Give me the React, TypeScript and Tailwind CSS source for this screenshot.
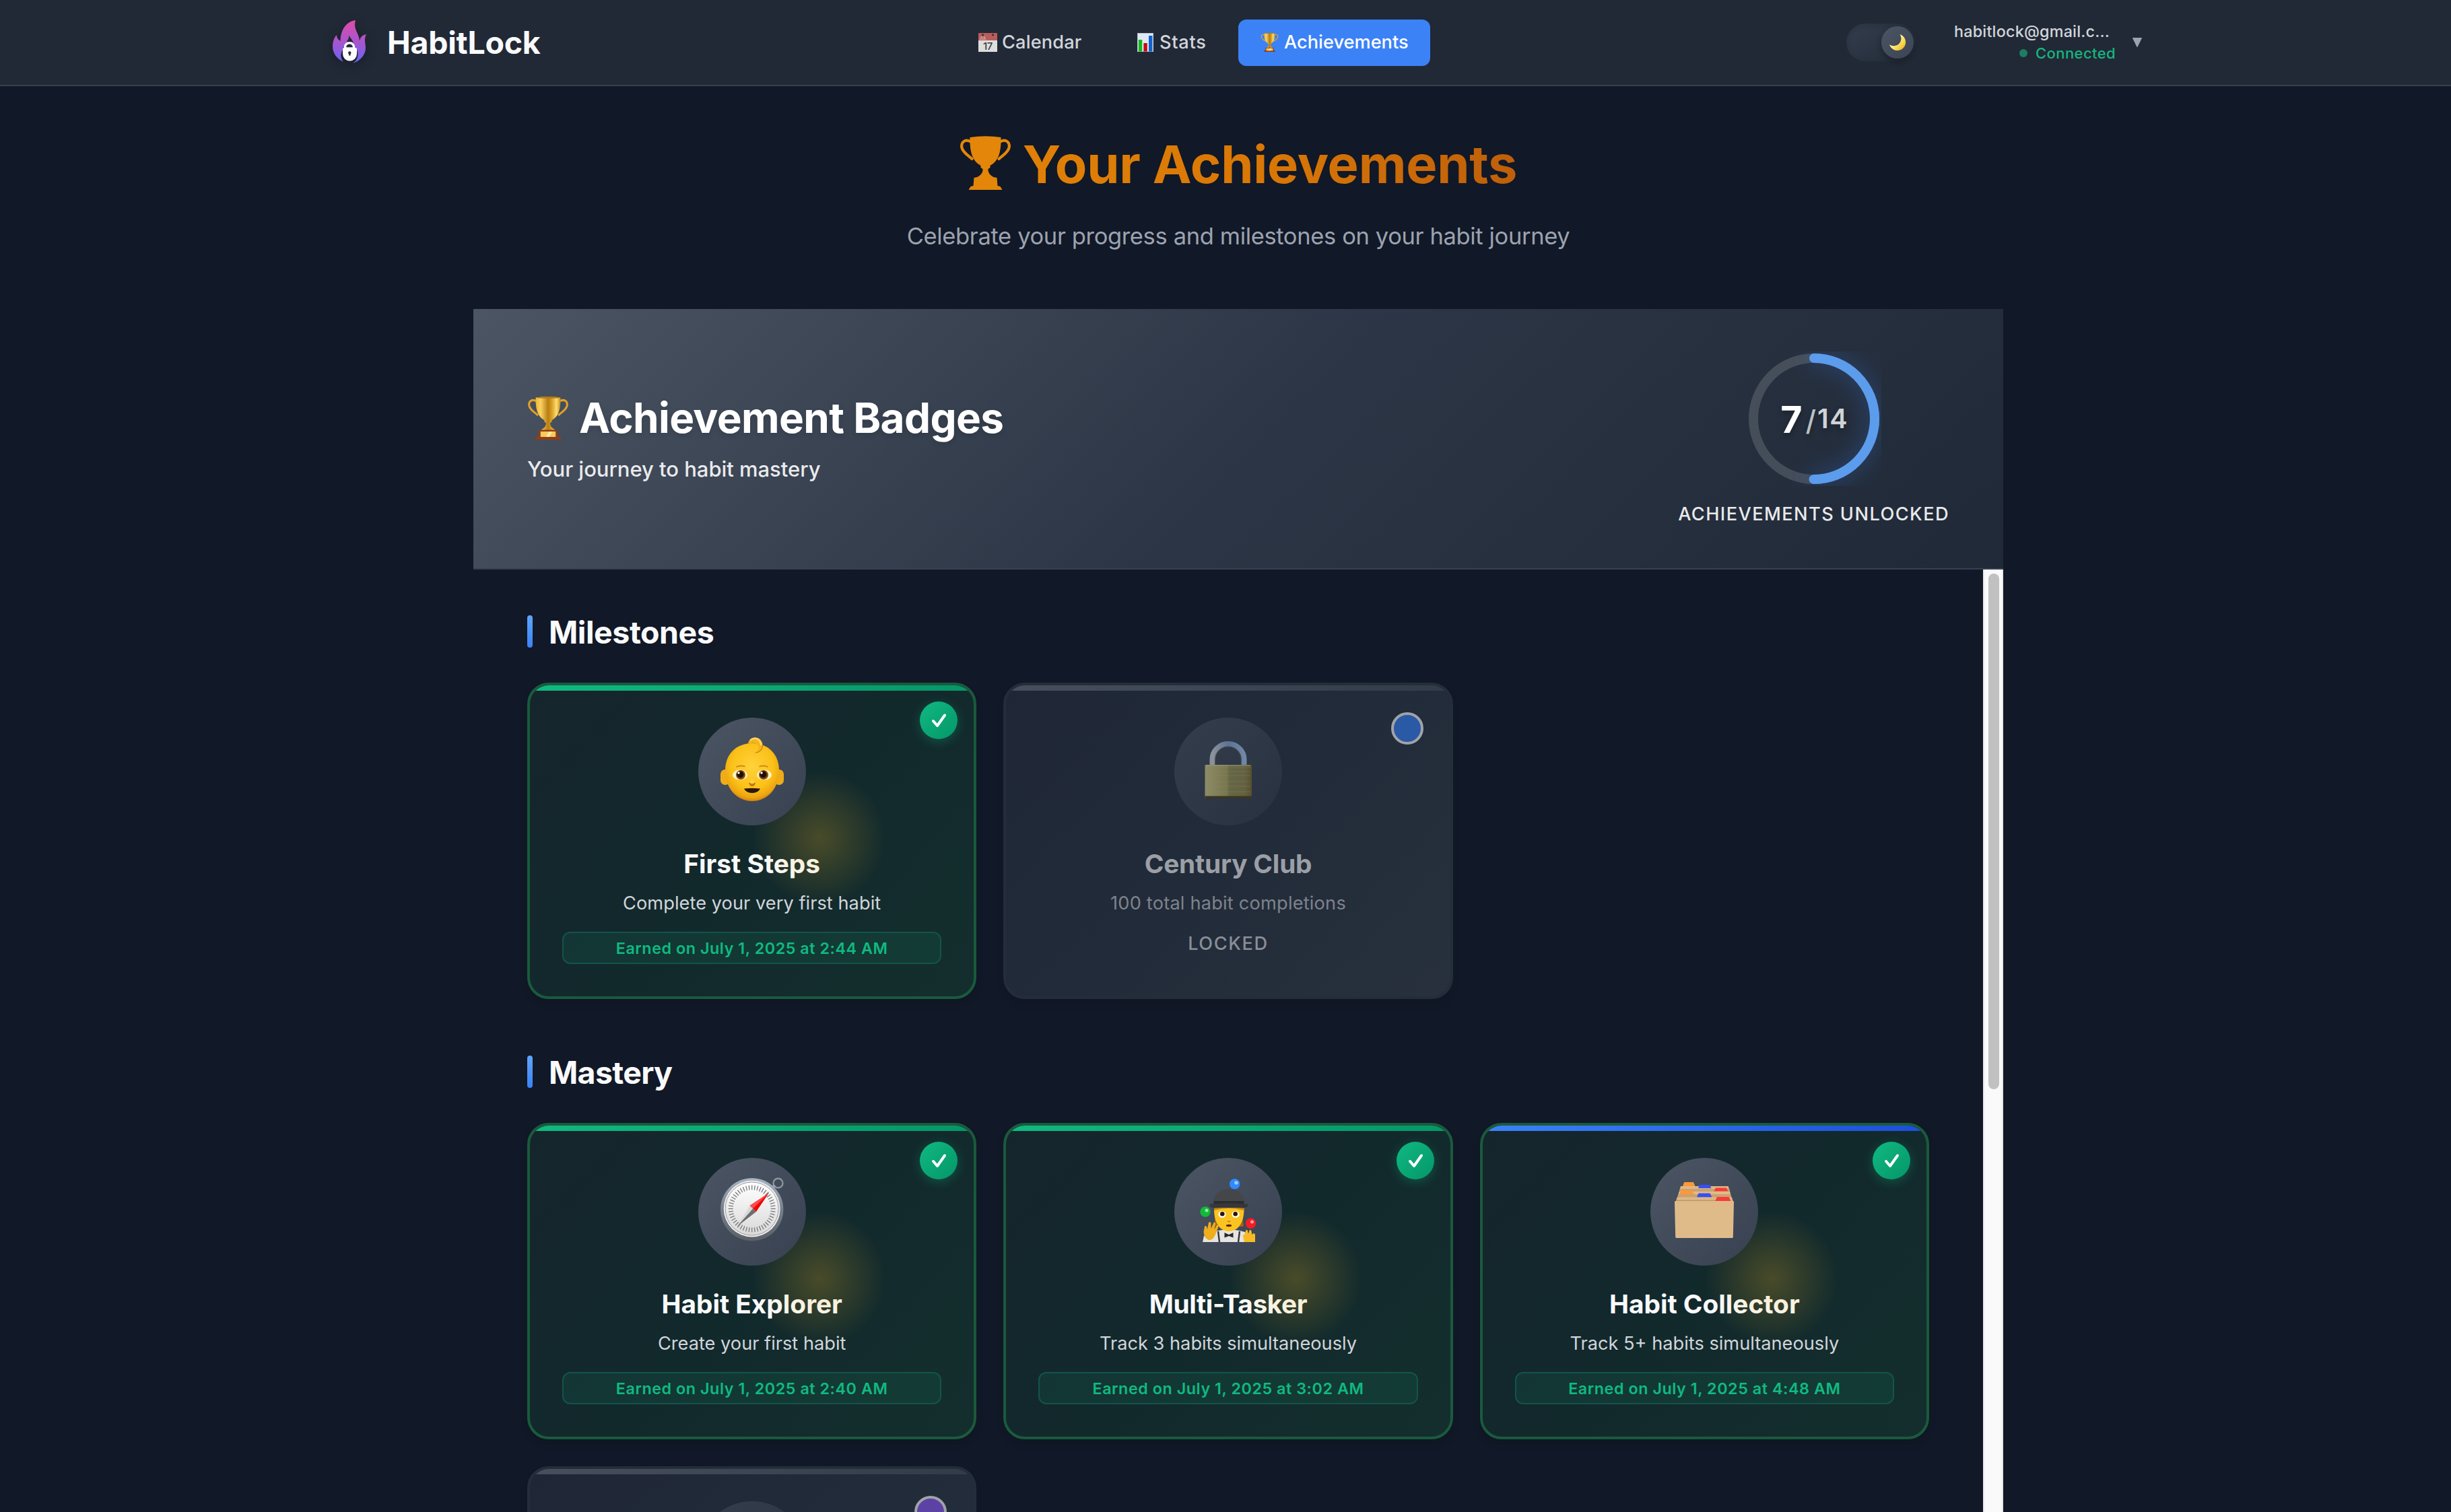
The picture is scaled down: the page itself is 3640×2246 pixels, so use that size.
import React from "react";
import type { ReactNode } from "react";

/* ---------- icons ---------- */

const CUP =
  "M15 2 Q38 -1.5 61 2 C61.5 23 58 37 45 44 L45 47 L42 49 C41.500 55 46 59 50 61 L55 62 L56 74 L60 75 L63 80 L13 80 L16 75 L20 74 L21 62 L26 61 C30 59 34.500 55 34 49 L31 47 L31 44 C18 37 14.500 23 15 2 Z";
const HANDLES =
  "M17 9 C9 4 1.500 8 2.800 17 C4.500 25 13 29 18 34 M59 9 C67 4 74.500 8 73.200 17 C71.500 25 63 29 58 34";

function TrophyFlat({ className }: { className: string }) {
  return (
    <svg viewBox="0 0 76 80" className={className}>
      <path d={CUP} fill="#e3860a" />
      <path d={HANDLES} fill="none" stroke="#e3860a" strokeWidth="4.2" strokeLinecap="round" />
    </svg>
  );
}

function TrophyGold({ id, className }: { id: string; className: string }) {
  return (
    <svg viewBox="0 0 76 80" className={className}>
      <defs>
        <linearGradient id={id} x1="0" x2="1" y1="0" y2="0">
          <stop offset="0" stopColor="#f0b52c" />
          <stop offset="0.2" stopColor="#f9d262" />
          <stop offset="0.5" stopColor="#b87d12" />
          <stop offset="0.66" stopColor="#dca324" />
          <stop offset="0.84" stopColor="#fbdf74" />
          <stop offset="1" stopColor="#c98a12" />
        </linearGradient>
      </defs>
      <path d={HANDLES} fill="none" stroke="#e0a02a" strokeWidth="3.8" strokeLinecap="round" />
      <path
        d="M15 2 Q38 -1.5 61 2 C61.5 23 58 37 45 44 L45 47 L42 49 C41.500 55 46 59 50 61 L50 64 L26 64 L26 61 C30 59 34.500 55 34 49 L31 47 L31 44 C18 37 14.500 23 15 2 Z"
        fill={`url(#${id})`}
      />
      <ellipse cx="38" cy="2" rx="22" ry="1.6" fill="#b57a14" />
      <path d="M21 62 H55 L56 74 L61 75 L62 80 H14 L15 75 L20 74 Z" fill="#8f3d17" />
      <rect x="24" y="65" width="28" height="10" fill="#f6c95c" />
      <path d="M34 75 L40 65 H46 L40 75 Z" fill="#fde7a8" />
    </svg>
  );
}

function Logo() {
  return (
    <svg viewBox="0 0 50 66" className="h-[66px] w-[50px] shrink-0 drop-shadow-[0_4px_8px_rgba(0,0,0,0.3)]">
      <defs>
        <linearGradient id="flame" x1="0" x2="0" y1="0" y2="1">
          <stop offset="0" stopColor="#e04ba8" />
          <stop offset="0.5" stopColor="#a855cf" />
          <stop offset="1" stopColor="#6366f1" />
        </linearGradient>
      </defs>
      <path
        d="M34 0 C20 2 12 14 11.500 31 C8 29 6 26 6 22 C2 26 0 32 0 39 C0 49 6 57 16 62 C12 57 11 51 15 44 L15 41 C17 37 24 33 24 23 C28 27 31 33 34 41 L36 44 C39 52 37 59 30 64 C42 60 49 51 49 41 C49 34 46 29 50 21 C44 22 41 25 40 31 C40 20 30 14 34 0 Z"
        fill="url(#flame)"
      />
      <path d="M15 42 L24 24 L35 42 Z" fill="url(#flame)" />
      <path d="M24 23 C25 27 22 29 21 32 L30 32 C28 29 25 27 24 23 Z" fill="#212937" />
      <path d="M18.500 42 V39 A6.700 6.700 0 0 1 31.500 39 V42 Z" fill="#212937" stroke="#fff" strokeWidth="3.4" />
      <path d="M17 41 H34 Q36 41 36 43 V50 A10.400 10.400 0 0 1 15 50 V43 Q15 41 17 41 Z" fill="#fff" />
      <circle cx="25.300" cy="48.500" r="2.200" fill="#212937" />
      <path d="M24.500 49 H26.200 L26.600 52.500 H24.100 Z" fill="#212937" />
    </svg>
  );
}

function CalendarIcon() {
  return (
    <svg viewBox="0 0 28 28" className="h-7 w-7 shrink-0">
      <rect width="28" height="28" fill="#dedede" />
      <rect width="28" height="11" fill="#b85d5c" />
      <circle cx="6.500" cy="2.800" r="1.600" fill="#3a3030" />
      <circle cx="21.500" cy="2.800" r="1.600" fill="#3a3030" />
      <text x="1.500" y="10" fontSize="5.500" fill="#ecc9c9" className="font-['Inter']">
        JUL
      </text>
      <text x="14" y="25" fontSize="15" textAnchor="middle" fill="#3b3b3b" className="font-['Inter'] tracking-[-0.5px]">
        17
      </text>
    </svg>
  );
}

function ChartIcon() {
  return (
    <svg viewBox="0 0 24 28" className="h-7 w-6 shrink-0">
      <rect width="24" height="28" fill="#dfe9f3" />
      <rect x="0.500" y="0.500" width="23" height="27" fill="none" stroke="#b9c4cf" />
      <rect x="1.800" y="10" width="5.400" height="17.500" fill="#10b81c" />
      <rect x="9.400" y="15" width="5.400" height="12.500" fill="#c40d0d" />
      <rect x="17" y="4" width="5.400" height="23.500" fill="#0f62cf" />
    </svg>
  );
}

function Moon() {
  return (
    <svg viewBox="0 0 24 24" className="h-6 w-6">
      <defs>
        <linearGradient id="moon" x1="0" x2="1" y1="0" y2="1">
          <stop offset="0.450" stopColor="#fdf08a" />
          <stop offset="0.750" stopColor="#f8cb3a" />
          <stop offset="1" stopColor="#e0a020" />
        </linearGradient>
      </defs>
      <path d="M15.500 0 A12.300 12.300 0 1 1 0 15.200 A11 11 0 0 0 15.500 0 Z" fill="url(#moon)" />
    </svg>
  );
}

function Baby() {
  return (
    <svg viewBox="0 0 160 160" className="size-full">
      <defs>
        <radialGradient id="skin" cx="0.5" cy="0.4" r="0.6">
          <stop offset="0" stopColor="#ffd23c" />
          <stop offset="0.650" stopColor="#fbc118" />
          <stop offset="0.900" stopColor="#eea510" />
          <stop offset="1" stopColor="#d5830f" />
        </radialGradient>
      </defs>
      <rect x="33" y="77" width="14" height="23" rx="7" fill="#f0ac18" />
      <rect x="113" y="77" width="14" height="23" rx="7" fill="#f0ac18" />
      <path d="M80 38 C103 38 120 54 120 78 C120 105 103 124 80 124 C57 124 40 105 40 78 C40 54 57 38 80 38 Z" fill="url(#skin)" />
      <path d="M74 39 C75 28 92 25 95.500 39 C97 47 92 52 84.500 52 C90 49 92 42 86 39 C82 37 78 38 74 39 Z" fill="#f4b41d" />
      <path d="M78 33 C84 28 92 32 93 40" fill="none" stroke="#ffd862" strokeWidth="2.500" strokeLinecap="round" />
      <path d="M84.500 52 C91 52 96 47 95.500 40" fill="none" stroke="#c77c10" strokeWidth="1.200" />
      <ellipse cx="62" cy="85" rx="11" ry="7.600" fill="#fff3c4" />
      <ellipse cx="98" cy="85" rx="11" ry="7.600" fill="#fff3c4" />
      <circle cx="63" cy="85" r="7" fill="#8a4a0c" />
      <circle cx="97" cy="85" r="7" fill="#8a4a0c" />
      <circle cx="62.500" cy="84.500" r="5" fill="#1c120a" />
      <circle cx="96.500" cy="84.500" r="5" fill="#1c120a" />
      <circle cx="60" cy="82" r="1.700" fill="#fff" />
      <circle cx="94" cy="82" r="1.700" fill="#fff" />
      <path d="M57 73 Q63 70.500 69 72.500 M91 72.500 Q97 70.500 103 73" fill="none" stroke="#c8860f" strokeWidth="1.600" strokeLinecap="round" />
      <path d="M75 97 Q80 94 85 97 Q84 102 80 102 Q76 102 75 97 Z" fill="#c27a10" />
      <ellipse cx="80" cy="95.500" rx="3.500" ry="2.800" fill="#ffcf3d" />
      <path d="M68 105.500 Q80 104 92 105.500 Q89 112 80 112 Q71 112 68 105.500 Z" fill="#2b170c" />
    </svg>
  );
}

function Padlock() {
  return (
    <svg viewBox="0 0 160 160" className="size-full">
      <defs>
        <linearGradient id="brass" x1="0" x2="1" y1="0" y2="0">
          <stop offset="0" stopColor="#8e8c66" />
          <stop offset="0.470" stopColor="#77764f" />
          <stop offset="0.520" stopColor="#666745" />
          <stop offset="0.850" stopColor="#636142" />
          <stop offset="1" stopColor="#574f2e" />
        </linearGradient>
        <linearGradient id="steel" x1="0" x2="1" y1="0" y2="0">
          <stop offset="0" stopColor="#8a929c" />
          <stop offset="0.5" stopColor="#5b7396" />
          <stop offset="1" stopColor="#6f87a8" />
        </linearGradient>
      </defs>
      <path d="M56.500 72 V62 A23.500 23 0 0 1 103.500 62 V72" fill="none" stroke="url(#steel)" strokeWidth="8" />
      <path d="M60.800 72 V62 A19.200 19 0 0 1 99.200 62 V72" fill="none" stroke="#4d4c45" strokeWidth="1.200" />
      <rect x="45.500" y="70" width="69.500" height="50" rx="1.500" fill="url(#brass)" />
      <path d="M47 74 H113 M47 80 H113 M47 86 H113 M47 95 H113 M47 102 H113 M47 110 H113" stroke="#8c8a66" strokeOpacity="0.350" strokeWidth="1.200" />
      <path d="M47 71.300 H113" stroke="#9b9b80" strokeOpacity="0.600" strokeWidth="1.600" />
      <path d="M45.500 116.500 H115 V118.500 Q115 120 113.500 120 H47 Q45.500 120 45.500 118.500 Z" fill="#3b3522" />
    </svg>
  );
}

const TICKS = Array.from({ length: 48 }, (_, i) => (i * 360) / 48);

function Compass() {
  return (
    <svg viewBox="0 0 160 160" className="size-full">
      <defs>
        <linearGradient id="rim" x1="0" x2="0" y1="0" y2="1">
          <stop offset="0" stopColor="#a9b4c2" />
          <stop offset="0.5" stopColor="#76808c" />
          <stop offset="1" stopColor="#5b5f65" />
        </linearGradient>
        <linearGradient id="dial" x1="0" x2="0" y1="0" y2="1">
          <stop offset="0" stopColor="#ffffff" />
          <stop offset="1" stopColor="#d9d9d9" />
        </linearGradient>
      </defs>
      <circle cx="118.500" cy="37.500" r="7" fill="none" stroke="#8d939c" strokeWidth="2.400" />
      <path d="M109 46 L114 41" stroke="#9aa1aa" strokeWidth="4" />
      <circle cx="79.700" cy="76.700" r="46.700" fill="url(#rim)" />
      <circle cx="79.700" cy="75.500" r="42" fill="#ececec" />
      <circle cx="79.700" cy="75.500" r="39.500" fill="url(#dial)" stroke="#9b9b9b" strokeWidth="1" />
      {TICKS.map((a) => (
        <path key={a} d="M79.700 40.500 V47.500" stroke="#777" strokeWidth="1.300" transform={`rotate(${a} 79.700 75.500)`} />
      ))}
      <path d="M105 52 L86 80 L76.500 71 Z" fill="#e80a0a" />
      <path d="M105 52 L81 75.500 L76.500 71 Z" fill="#ff4a4a" />
      <path d="M57.500 102 L76.500 71 L81 75.500 Z" fill="#d9d9d9" />
      <path d="M57.500 102 L86 80 L81 75.500 Z" fill="#6e6e6e" />
    </svg>
  );
}

function Juggler() {
  return (
    <svg viewBox="0 0 160 160" className="size-full">
      <path d="M60 74 H102 V96 Q104 101 101 102 L61 102 Q58 100 60 96 Z" fill="#a5680f" />
      <path d="M42 125 L44 116 Q58 108 72 107 L90 107 Q104 108 116 116 L120 125 Z" fill="#e6e4e0" />
      <path d="M65 109 L67 125 M97 109 L95 125" stroke="#34363b" strokeWidth="2.400" />
      <path d="M59 74 H103.500 C104 94 96 109 81 109 C66 109 58.500 94 59 74 Z" fill="#fbc31f" />
      <path d="M59 74 H103 V78 Q81 72 59 78 Z" fill="#c98a14" />
      <ellipse cx="71" cy="84" rx="5.600" ry="4.800" fill="#fff" />
      <ellipse cx="91" cy="84" rx="5.600" ry="4.800" fill="#fff" />
      <circle cx="71.300" cy="83.300" r="3.300" fill="#2a1608" />
      <circle cx="90.700" cy="83.300" r="3.300" fill="#2a1608" />
      <path d="M79 93.500 Q81 96 83 93.500" fill="none" stroke="#c27d10" strokeWidth="1.500" />
      <ellipse cx="81" cy="100.500" rx="4.200" ry="1.700" fill="#5b1f10" />
      <path d="M58.500 69 C58 54 66 46.700 81 46.700 C96 46.700 104 54 103.500 69 Z" fill="#45464a" />
      <path d="M58.500 64 H103.500 V69 H58.500 Z" fill="#2b2c2f" />
      <path d="M52 69 Q54 68 58 68.500 Q81 66 104 68.500 Q108 68 110 69 Q109 74 103 74.500 Q81 73 59 74.500 Q53 74 52 69 Z" fill="#36373a" />
      <path d="M74.500 111 L81 114 L87.500 111 V118.500 L81 116 L74.500 118.500 Z" fill="#26282c" />
      <path
        d="M45 102 Q46 100 48 102 L49 106 L51 96 Q53 94.500 54.500 96.500 L54.500 105 L58.500 96 Q61 95 61 98 L59.500 106 L63 100 Q66 99 65.600 102 L61 114 Q57 123 51 122 Q44 119 43.500 110 Z"
        fill="#f0ad1c"
      />
      <path
        d="M102 117 Q102 113 104.500 114 L106 108 Q108 106 109 108.500 L110 113 L111.500 107.500 Q114 106 114.500 109 L115.500 114 L117.500 112 Q120 112 120 115 L120 125 H104 Z"
        fill="#f7bb25"
      />
      <circle cx="89.700" cy="38.700" r="7.700" fill="#2e8bff" />
      <circle cx="92" cy="37" r="2.800" fill="#9accff" />
      <circle cx="46" cy="80" r="7.700" fill="#14b83a" />
      <circle cx="48" cy="78" r="2.500" fill="#8cf0a0" />
      <circle cx="113.500" cy="97.300" r="7.700" fill="#f31d24" />
      <circle cx="115.500" cy="95" r="2.500" fill="#ff9a9d" />
    </svg>
  );
}

function CardIndex() {
  return (
    <svg viewBox="0 0 160 160" className="size-full">
      <path d="M48 42 L50 36.500 Q50.300 36 51 36 H64 L66.500 42 Z" fill="#fb983a" />
      <path d="M45 42 H115.500 L118 49 H43 Z" fill="#dfb783" />
      <path d="M71 45 L73 40 H88 L90.500 45 Z" fill="#3650f5" />
      <path d="M44 46 H117 L119 54 H42 Z" fill="#c9a273" />
      <path d="M94.500 49.500 L97 44.500 H113 L115.500 49.500 Z" fill="#f73a3a" />
      <path d="M42.500 50 H118 L120 58 H41 Z" fill="#e2ba86" />
      <path d="M43 54 L45.500 48 H62 L65 54 Z" fill="#fb983a" />
      <path d="M41 54 H119 L121 60 H40 Z" fill="#c9a273" />
      <path d="M69 58.500 L71.500 52.500 H88.500 L91.500 58.500 Z" fill="#3650f5" />
      <path d="M39.500 58.500 H121 L123 65 H38 Z" fill="#dfb783" />
      <path d="M96 64 L99 58 H116.500 L119.500 64 Z" fill="#f73a3a" />
      <path d="M38 62.500 H96 V65 H38 Z" fill="#bd976a" />
      <path d="M37.500 64 H122.500 Q124 64 124 65.500 L122.800 117.500 Q122.700 119 121 119 H39 Q37.300 119 37.200 117.500 L36 65.500 Q36 64 37.500 64 Z" fill="#e0bb8a" />
    </svg>
  );
}

/* ---------- header ---------- */

function Header() {
  return (
    <header className="flex h-32 shrink-0 items-center border-b-2 border-[#374151] bg-[#212936] pl-[494px]">
      <div className="flex w-[927px] items-center gap-[31px]">
        <Logo />
        <span className="text-[46.5px] leading-none font-bold tracking-[-0.27px] text-[#f9fafb]">HabitLock</span>
      </div>
      <nav className="flex w-[703px] items-center justify-between text-[27.2px] leading-[34px] font-medium text-[#d1d5db]">
        <a className="flex h-[69px] w-[219px] items-center gap-[7px] pl-8">
          <CalendarIcon />
          <span className="tracking-[0.14px]">Calendar</span>
        </a>
        <a className="flex h-[69px] w-[167px] items-center gap-[9px] pl-[33px]">
          <ChartIcon />
          <span className="tracking-[0.7px]">Stats</span>
        </a>
        <a className="flex h-[69px] w-[285px] items-center gap-2 rounded-xl bg-[#3b82f6] pl-[33px] text-white">
          <TrophyGold id="gold-nav" className="h-7 w-[27px] shrink-0" />
          <span>Achievements</span>
        </a>
      </nav>
      <div className="ml-[618px] flex items-center">
        <div className="flex h-14 w-[104px] items-center justify-end rounded-full bg-linear-to-br from-[#343e4d] to-[#212b38] pr-1 shadow-[inset_0_4px_8px_rgba(0,0,0,0.15)]">
          <div className="flex size-12 items-center justify-center rounded-full bg-linear-to-br from-[#4b5563] to-[#3b4455] shadow-[0_4px_10px_rgba(0,0,0,0.3)]">
            <Moon />
          </div>
        </div>
        <div className="ml-[56px] flex w-[240px] flex-col">
          <span className="text-[23.3px] leading-8 font-medium tracking-[0.23px] text-[#d1d5db]">habitlock@gmail.c...</span>
          <span className="flex items-center justify-end gap-3 text-[22px] leading-8 font-medium tracking-[0.4px] text-[#18b57f]">
            <i className="size-3 rounded-full bg-[#1a7f62]" />
            Connected
          </span>
        </div>
        <svg viewBox="0 0 14 14" className="ml-[25px] size-3.5">
          <path d="M0.500 0 H13.500 Q14.200 0 13.800 1 L7.600 13.400 Q7 14.400 6.400 13.400 L0.200 1 Q-0.200 0 0.500 0 Z" fill="#9ca3af" />
        </svg>
      </div>
    </header>
  );
}

/* ---------- panel ---------- */

function ProgressRing() {
  return (
    <div className="relative size-[200px]">
      <svg viewBox="0 0 200 200" className="size-full -rotate-90 overflow-hidden">
        <circle cx="100" cy="100" r="90" fill="none" stroke="#fff" strokeOpacity="0.150" strokeWidth="14" />
        <circle
          cx="100"
          cy="100"
          r="90"
          fill="none"
          stroke="#5c9ced"
          strokeWidth="14"
          strokeLinecap="round"
          strokeDasharray="282.7 565.5"
          className="[filter:drop-shadow(0_0_16px_rgba(59,130,246,0.4))]"
        />
      </svg>
      <div className="absolute inset-0 flex items-center justify-center pt-[2px] pl-[2px] leading-none [text-shadow:0_4px_8px_rgba(0,0,0,0.3)]">
        <span className="text-[55.5px] font-bold text-white">7</span>
        <span className="ml-[5px] pt-[3px] text-[42px] font-medium text-[#bcc0c5]">/</span>
        <span className="ml-[2px] text-[39.5px] font-semibold tracking-[1.5px] text-[#d0d3d7]">14</span>
      </div>
    </div>
  );
}

function PanelHeader() {
  return (
    <div className="flex h-[387px] shrink-0 items-center justify-between border-b-2 border-[#374151] bg-linear-135 from-[#4b5563] via-[#2d3646] to-[#1f2937] px-20">
      <div className="flex flex-col">
        <div className="flex items-center gap-[15px]">
          <TrophyGold id="gold-panel" className="h-16 w-[62px] shrink-0" />
          <h2 className="text-[62px] leading-[77px] font-bold tracking-[-0.65px] text-white [text-shadow:0_4px_8px_rgba(0,0,0,0.12)]">
            Achievement Badges
          </h2>
        </div>
        <p className="mt-[14px] text-[31px] leading-[48px] font-medium tracking-[-0.03px] text-[#e9eaec]">
          Your journey to habit mastery
        </p>
      </div>
      <div className="flex flex-col items-center">
        <ProgressRing />
        <p className="mt-[25px] text-[27.2px] leading-[34px] font-medium tracking-[1.42px] text-[#e8e9eb]">ACHIEVEMENTS UNLOCKED</p>
      </div>
    </div>
  );
}

type UnlockedProps = {
  icon: ReactNode;
  title: string;
  titleTracking: string;
  text: string;
  textTracking: string;
  earned: string;
  strip: string;
};

function UnlockedCard({ icon, title, titleTracking, text, textTracking, earned, strip }: UnlockedProps) {
  return (
    <article className="relative flex h-[470px] flex-col items-center overflow-hidden rounded-[32px] border-4 border-[#1a5a3d] bg-linear-135 from-[#15252c] via-[#12292c] to-[#142e2d] px-12 pt-12 text-center shadow-[0_8px_12px_rgba(0,0,0,0.1)]">
      <div className={`absolute inset-x-0 top-0 h-2 bg-linear-to-r ${strip}`} />
      <div className="absolute top-6 right-6 size-14 rounded-full bg-linear-to-br from-[#10b981] to-[#059669] shadow-[0_4px_16px_rgba(16,185,129,0.3)]">
        <svg viewBox="0 0 56 56" className="size-full">
          <path d="M20 29 L26 36 L37 20.500" fill="none" stroke="#fff" strokeWidth="4" strokeLinecap="round" strokeLinejoin="round" />
        </svg>
      </div>
      <div className="relative z-10 size-40 shrink-0 rounded-full bg-linear-to-br from-[#4b5563] to-[#374151]">{icon}</div>
      <h4 className={`mt-[30px] text-[38.8px] leading-[53px] font-bold text-[#f9fafb] ${titleTracking}`}>{title}</h4>
      <p className={`mt-[13px] text-[27.2px] leading-10 text-[#d1d5db] ${textTracking}`}>{text}</p>
      <div className="mt-[22px] h-12 w-full rounded-xl border-2 border-[#13544a] bg-[#10b981]/10 text-[23.3px] leading-[45px] font-semibold tracking-[0.55px] text-[#10b981]">
        {earned}
      </div>
      <div className="absolute top-[127px] left-1/2 size-[200px] bg-[radial-gradient(circle,rgba(251,185,30,0.235)_0%,transparent_70%)]" />
    </article>
  );
}

function LockedCard({ icon, dot, children }: { icon?: ReactNode; dot: string; children?: ReactNode }) {
  return (
    <article className="relative flex h-[470px] flex-col items-center overflow-hidden rounded-[32px] border-4 border-[#242d3a] bg-linear-135 from-[#1f2736] via-[#222b39] to-[#27303c] px-12 pt-12 text-center shadow-[0_8px_12px_rgba(0,0,0,0.08)]">
      <div className="absolute inset-x-0 top-0 h-2 bg-linear-to-r from-[#474f5d] to-[#323c49]" />
      <div className={`absolute top-10 right-10 size-12 rounded-full border-4 border-[#a0a3a9] ${dot}`} />
      <div className="size-40 shrink-0 rounded-full bg-linear-to-br from-[#343e4b] to-[#293141]">{icon}</div>
      {children}
    </article>
  );
}

function Section({ title, tracking, children }: { title: string; tracking: string; children: ReactNode }) {
  return (
    <section className="flex flex-col">
      <div className="flex h-12 items-center gap-6">
        <i className="h-12 w-2 rounded-[4px] bg-linear-to-b from-[#60a5fa] to-[#3b82f6]" />
        <h3 className={`pt-[2px] text-[46.5px] leading-none font-bold text-[#f9fafb] ${tracking}`}>{title}</h3>
      </div>
      <div className="mt-[52px] grid grid-cols-3 gap-10">{children}</div>
    </section>
  );
}

export default function App() {
  return (
    <div className="flex h-[2246px] w-[3640px] flex-col overflow-hidden bg-[#111827] font-['Inter',sans-serif]">
      <Header />
      <main className="ml-[703px] flex min-h-0 w-[2272px] flex-1 flex-col pt-[68px]">
        <div className="flex items-center justify-center gap-[17px]">
          <TrophyFlat className="mb-1 h-20 w-[77px]" />
          <h1 className="bg-linear-to-r from-[#e08007] via-[#d97706] to-[#be5f0a] bg-clip-text text-[77.6px] leading-[96px] font-bold tracking-[-0.21px] text-transparent">
            Your Achievements
          </h1>
        </div>
        <p className="mt-[31px] mb-[80px] text-center text-[34.5px] leading-[56px] tracking-[-0.36px] text-[#9ca3af]">
          Celebrate your progress and milestones on your habit journey
        </p>
        <PanelHeader />
        <div className="flex min-h-0 flex-1 overflow-hidden">
          <div className="flex flex-1 flex-col gap-[84px] px-20 pt-[68px]">
            <Section title="Milestones" tracking="tracking-[-0.47px]">
              <UnlockedCard
                icon={<Baby />}
                title="First Steps"
                titleTracking="tracking-normal"
                text="Complete your very first habit"
                textTracking="tracking-[0.05px]"
                earned="Earned on July 1, 2025 at 2:44 AM"
                strip="from-[#10b981] to-[#059669]"
              />
              <LockedCard icon={<Padlock />} dot="bg-[#2a5aa6]">
                <h4 className="mt-[30px] text-[38.8px] leading-[53px] font-bold tracking-[-0.2px] text-[#9b9fa6]">Century Club</h4>
                <p className="mt-[13px] text-[27.2px] leading-10 tracking-[0.2px] text-[#7e838d]">100 total habit completions</p>
                <p className="mt-[23px] text-[27.2px] leading-[34px] font-medium tracking-[1.6px] text-[#898e98]">LOCKED</p>
              </LockedCard>
            </Section>
            <Section title="Mastery" tracking="tracking-[-0.7px]">
              <UnlockedCard
                icon={<Compass />}
                title="Habit Explorer"
                titleTracking="tracking-normal"
                text="Create your first habit"
                textTracking="tracking-normal"
                earned="Earned on July 1, 2025 at 2:40 AM"
                strip="from-[#10b981] to-[#059669]"
              />
              <UnlockedCard
                icon={<Juggler />}
                title="Multi-Tasker"
                titleTracking="tracking-[-0.4px]"
                text="Track 3 habits simultaneously"
                textTracking="tracking-normal"
                earned="Earned on July 1, 2025 at 3:02 AM"
                strip="from-[#10b981] to-[#059669]"
              />
              <UnlockedCard
                icon={<CardIndex />}
                title="Habit Collector"
                titleTracking="tracking-normal"
                text="Track 5+ habits simultaneously"
                textTracking="tracking-normal"
                earned="Earned on July 1, 2025 at 4:48 AM"
                strip="from-[#3b82f6] to-[#1d4ed8]"
              />
              <LockedCard dot="bg-[#5d42a6]" />
            </Section>
          </div>
          <div className="w-[30px] shrink-0 border-x-2 border-[#e8e8e8] bg-[#fafafa] pt-[6px] pl-[6px]">
            <div className="h-[766px] w-4 rounded-full bg-[#c1c1c1]" />
          </div>
        </div>
      </main>
    </div>
  );
}
